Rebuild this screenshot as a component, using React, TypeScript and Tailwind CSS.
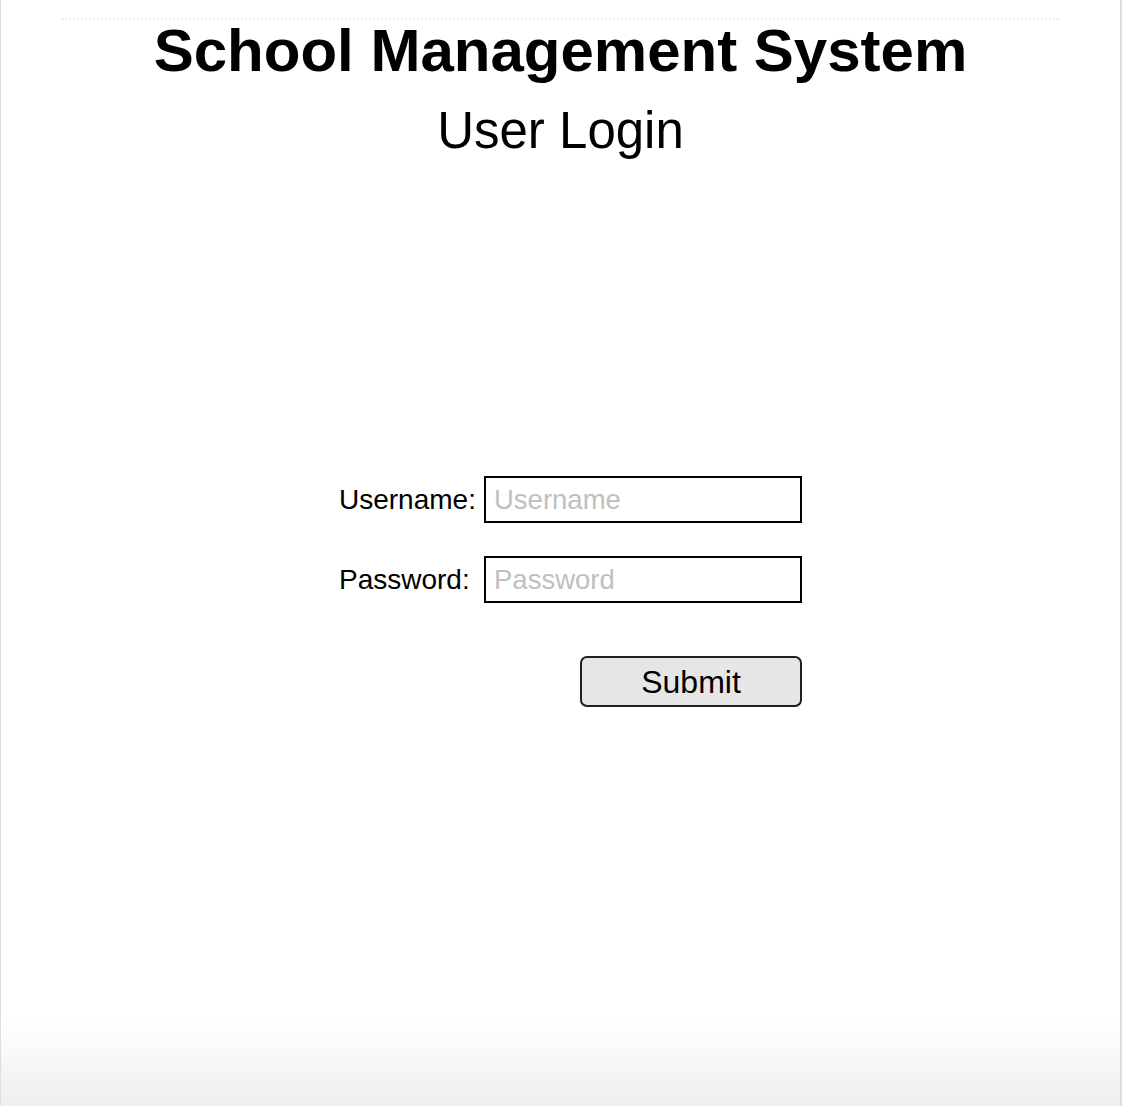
export default function App() {
  return (
    <div className="h-[1106px] w-full border-l border-l-[#dedede] border-r-2 border-r-[#dcdcdc] bg-linear-to-b from-white from-[92%] to-[#efefef] font-['Liberation_Sans',Arial,sans-serif] text-black">
      <div className="mx-[61px] pt-[18px]">
        <div className="border-t-2 border-dotted border-t-[#ececec]" />
      </div>
      <h1 className="mt-[1px] text-center text-[60px] font-bold leading-none">School Management System</h1>
      <h2 className="mt-[24px] text-center text-[51px] leading-none">User Login</h2>

      <form className="mx-auto mt-[320px] flex w-[483px] flex-col pl-[20px]" onSubmit={(e) => e.preventDefault()}>
        <div className="flex items-center">
          <label className="w-[145px] text-[28px]">Username:</label>
          <input
            type="text"
            placeholder="Username"
            className="h-[47px] w-[318px] border-2 border-black px-2 text-[27.5px] outline-none placeholder:text-[#c0c0c0]"
          />
        </div>
        <div className="mt-[33px] flex items-center">
          <label className="w-[145px] text-[28px]">Password:</label>
          <input
            type="password"
            placeholder="Password"
            className="h-[47px] w-[318px] border-2 border-black px-2 text-[27.5px] outline-none placeholder:text-[#c0c0c0]"
          />
        </div>
        <div className="mt-[53px] flex justify-end">
          <button
            type="submit"
            className="h-[51px] w-[222px] rounded-[7px] border-2 border-[#1f1f1f] bg-[#e6e6e6] text-[32px]"
          >
            Submit
          </button>
        </div>
      </form>
    </div>
  );
}
